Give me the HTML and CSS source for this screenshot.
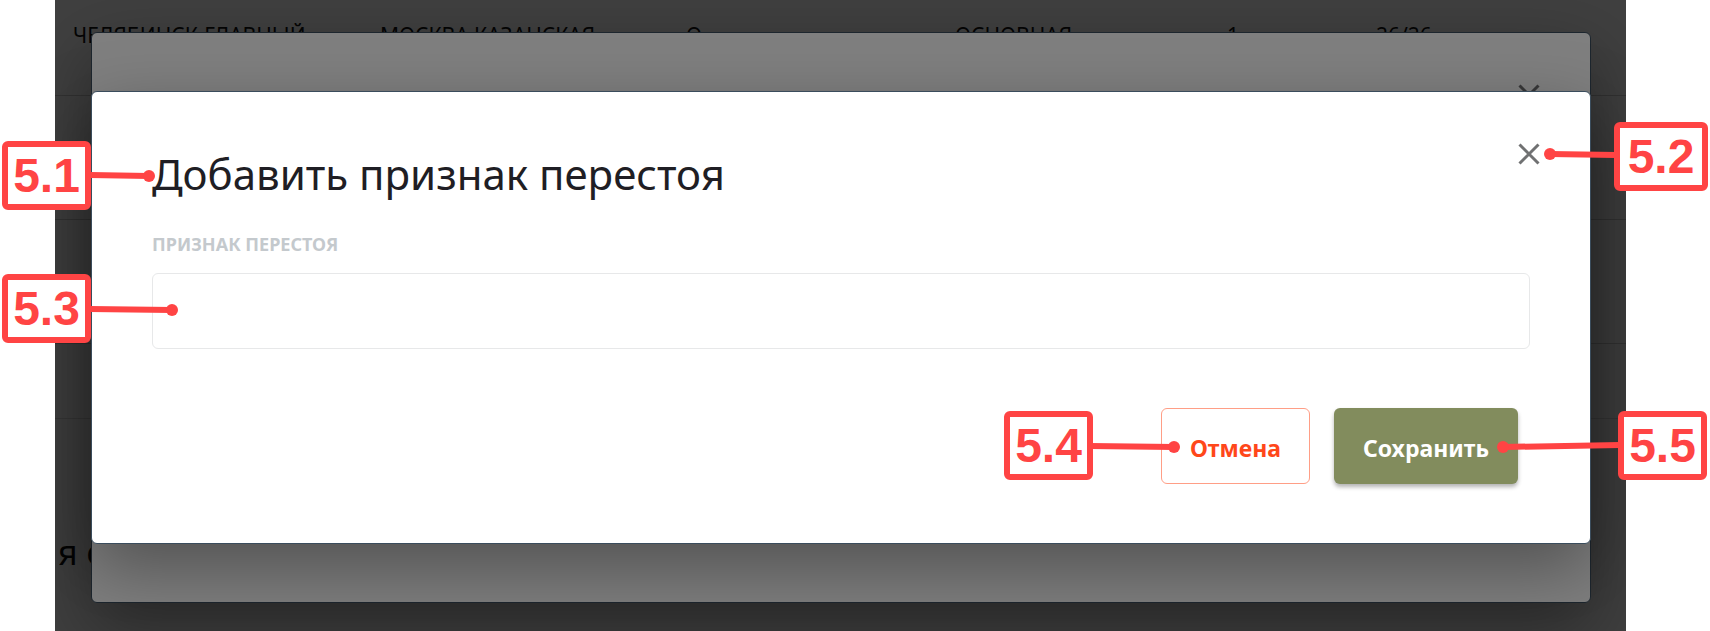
FILE: index.html
```html
<!DOCTYPE html>
<html lang="ru">
<head>
<meta charset="utf-8">
<title>Добавить признак перестоя</title>
<link rel="stylesheet" href="styles.css">
</head>
<body>
<div class="stage">
  <div class="app">
    <table class="grid">
      <tbody>
        <tr class="row"><td class="c1">ЧЕЛЯБИНСК-ГЛАВНЫЙ</td><td class="c2">МОСКВА КАЗАНСКАЯ</td><td class="c3">О</td><td class="c4">ОСНОВНАЯ</td><td class="c5">1</td><td class="c6">26/26</td></tr>
        <tr class="row"><td colspan="6"></td></tr>
        <tr class="row"><td colspan="6"></td></tr>
      </tbody>
    </table>
    <div class="grid-foot"></div>
    <p class="caption">я о</p>
  </div>
  <div class="shade"></div>
  <div class="parent-dialog">
    <button class="close" type="button" aria-label="Закрыть" tabindex="-1"><svg viewBox="0 0 22 22"><path d="M1.5 1.5L20.5 20.5M20.5 1.5L1.5 20.5"/></svg></button>
  </div>
  <div class="shade"></div>
  <form class="dialog" role="dialog" aria-labelledby="dialog-title">
    <header class="dialog-head">
      <h1 class="title" id="dialog-title">Добавить признак перестоя</h1>
      <button class="close" type="button" aria-label="Закрыть"><svg viewBox="0 0 22 22"><path d="M1.5 1.5L20.5 20.5M20.5 1.5L1.5 20.5"/></svg></button>
    </header>
    <label class="label" for="reason">ПРИЗНАК ПЕРЕСТОЯ</label>
    <input class="field" id="reason" type="text">
    <div class="actions">
      <button class="btn cancel" type="button">Отмена</button>
      <button class="btn save" type="submit">Сохранить</button>
    </div>
  </form>
  <svg class="wires left-wires" viewBox="0 0 180 631"><path d="M90 175L149 176M90 309L172 310"/><circle cx="149" cy="176" r="6"/><circle cx="172" cy="310" r="6"/></svg>
  <svg class="wires right-wires" viewBox="0 0 720 631"><path d="M560 154L626 155M100 446L184 447M513 447L630 445"/><circle cx="560" cy="154" r="6"/><circle cx="184" cy="447" r="6"/><circle cx="513" cy="447" r="6"/></svg>
  <span class="mark m1">5.1</span>
  <span class="mark m2">5.2</span>
  <span class="mark m3">5.3</span>
  <span class="mark m4">5.4</span>
  <span class="mark m5">5.5</span>
</div>
</body>
</html>
```
FILE: styles.css
```css
* { box-sizing: border-box; }
body { margin: 0; background: #fff; font-family: "Noto Sans", "Open Sans", sans-serif; }
.stage { position: relative; min-height: 100vh; padding: 91px 119px 87px 91px; overflow: hidden; }
.app { position: absolute; inset: 0 84px 0 55px; background: #fff; overflow: hidden; }
.grid { width: 100%; border-collapse: collapse; table-layout: fixed; font-size: 21px; line-height: 28px; color: #111; margin-top: -29px; }
.row { height: 124px; border-bottom: 1px solid #ccc; }
.row td { padding: 4px 0 0 18px; white-space: nowrap; }
.c1 { width: 307px; }
.c2 { width: 306px; }
.c3 { width: 269px; }
.c4 { width: 272px; }
.c5 { width: 149px; }
.grid-foot { height: 75px; border-bottom: 1px solid #ddd; }
.caption { margin: 109px 0 0 3px; font-size: 34px; line-height: 48px; color: #111; }
.shade { position: absolute; inset: 0 84px 0 55px; background: rgba(0, 0, 0, .5); }
.parent-dialog, .dialog { border: 1px solid #3a4c5c; border-radius: 6px; background: #fff; box-shadow: 0 25px 70px rgba(0, 0, 0, .36); }
.parent-dialog { position: absolute; inset: 32px 119px 28px 91px; display: flex; justify-content: flex-end; align-items: flex-start; padding: 51px 50px; clip-path: inset(-32px -35px -28px -36px); }
.dialog { position: relative; display: flex; flex-direction: column; padding: 51px 60px 59px; clip-path: inset(-91px -35px -87px -36px); }
.dialog-head { display: flex; justify-content: space-between; align-items: flex-start; margin-right: -10px; }
.title { margin: 0; padding-top: 1px; font-size: 42px; line-height: 60px; font-weight: 400; color: #1f1e24; }
.close { display: flex; padding: 0; border: 0; background: none; }
.close svg { width: 22px; height: 22px; fill: none; stroke: #707172; stroke-width: 3; }
.label { margin-top: 28px; font-size: 18px; line-height: 24px; font-weight: 700; color: #c4c9cd; }
.field { width: 100%; height: 76px; margin-top: 17px; padding: 0 20px; border: 1px solid #e7e8e9; border-radius: 6px; background: #fff; font: inherit; font-size: 20px; }
.actions { display: flex; justify-content: flex-end; gap: 24px; margin: 59px 12px 0 0; }
.btn { height: 76px; padding: 4px 28px 0; border: 1px solid transparent; border-radius: 6px; font: 700 23px/32px "Noto Sans", "Open Sans", sans-serif; }
.cancel { border-color: #ff9e86; background: #fff; color: #ff471a; }
.save { background: #828c5d; color: #fff; box-shadow: 0 3px 4px rgba(0, 0, 0, .3); }
.wires { position: absolute; top: 0; height: 631px; fill: #ff4444; stroke: none; }
.wires path { stroke: #ff4444; stroke-width: 6; }
.left-wires { left: 0; width: 180px; }
.right-wires { right: 0; width: 720px; }
.mark { position: absolute; width: 89px; height: 69px; border: 6px solid #ff4444; border-radius: 6px; background: #fff; color: #ff4444; font: 700 48px/57px "Liberation Sans", Arial, sans-serif; text-align: center; }
.m1 { left: 2px; top: 141px; }
.m2 { right: 2px; top: 122px; width: 94px; }
.m3 { left: 2px; top: 274px; }
.m4 { right: 617px; top: 411px; }
.m5 { right: 3px; top: 411px; }
```
